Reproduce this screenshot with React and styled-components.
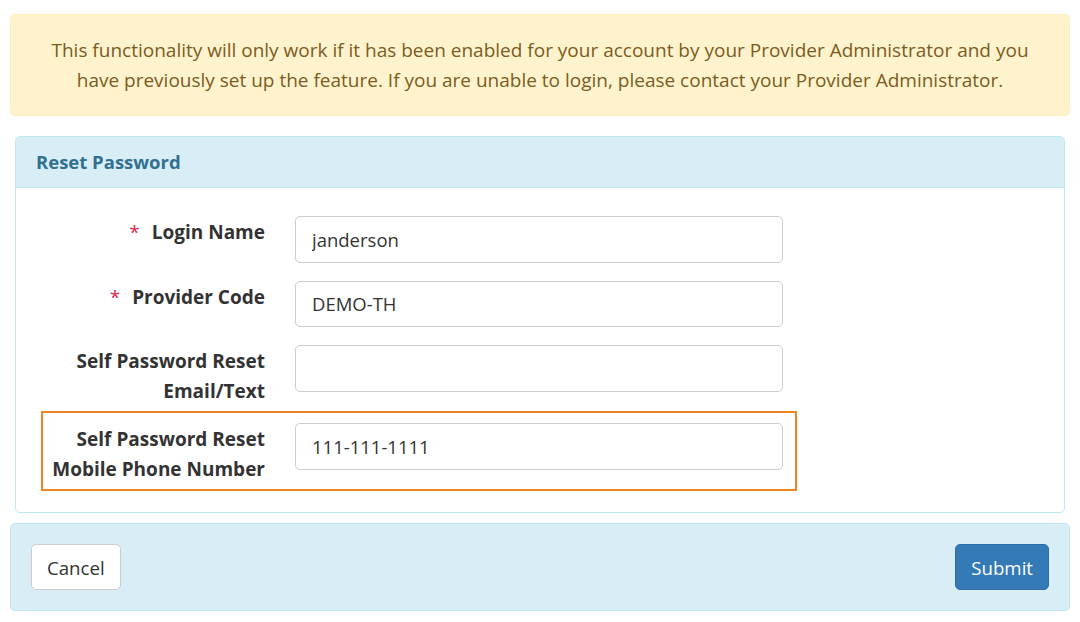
import styled, { createGlobalStyle } from "styled-components";

const GlobalStyle = createGlobalStyle`
    body {
        margin: 0;
        background: #fff;
        font-family: "Open Sans", "Noto Sans", sans-serif;
        color: #333;
    }
`;

const fields = [
    { id: "login", label: ["Login Name"], value: "janderson", required: true },
    { id: "provider", label: ["Provider Code"], value: "DEMO-TH", required: true },
    { id: "email", label: ["Self Password Reset", "Email/Text"], value: "" },
    { id: "mobile", label: ["Self Password Reset", "Mobile Phone Number"], value: "111-111-1111", highlight: true },
];

export default function App() {
    return (
        <>
            <GlobalStyle />
            <StyledPage>
                <StyledAlert>
                    This functionality will only work if it has been enabled for your account by your Provider Administrator and you
                    have previously set up the feature. If you are unable to login, please contact your Provider Administrator.
                </StyledAlert>

                <StyledPanel>
                    <StyledPanelHeading>
                        <StyledPanelTitle>Reset Password</StyledPanelTitle>
                    </StyledPanelHeading>
                    <StyledPanelBody>
                        {fields.map((field) => (
                            <StyledRow key={field.id} $highlight={field.highlight}>
                                <StyledLabel htmlFor={field.id}>
                                    {field.required && <StyledRequired>*</StyledRequired>}
                                    {field.label.map((line, index) => (
                                        <span key={index}>
                                            {index > 0 && <br />}
                                            {line}
                                        </span>
                                    ))}
                                </StyledLabel>
                                <StyledInput id={field.id} type="text" defaultValue={field.value} />
                            </StyledRow>
                        ))}
                    </StyledPanelBody>
                </StyledPanel>

                <StyledFooter>
                    <StyledButton type="button">Cancel</StyledButton>
                    <StyledButton type="button" $primary>
                        Submit
                    </StyledButton>
                </StyledFooter>
            </StyledPage>
        </>
    );
}

const StyledPage = styled.div`
    padding: 14px 10px 10px;
`;

const StyledAlert = styled.div`
    background: #fff3cd;
    border: 1px solid #ffeeba;
    border-radius: 5px;
    color: #7b5b22;
    padding: 20px;
    text-align: center;
    font-size: 19px;
    line-height: 30px;
`;

const StyledPanel = styled.section`
    margin: 20px 5px 0;
    border: 1px solid #bce8f1;
    border-radius: 5px;
    background: #fff;
`;

const StyledPanelHeading = styled.header`
    background: #d9edf7;
    border-bottom: 1px solid #bce8f1;
    border-radius: 4px 4px 0 0;
    padding: 13px 20px;
`;

const StyledPanelTitle = styled.h3`
    margin: 0;
    font-size: 18.5px;
    line-height: 24px;
    font-weight: 700;
    color: #31708f;
`;

const StyledPanelBody = styled.div`
    display: flex;
    flex-direction: column;
    padding: 28px 0 21px;
`;

const StyledRow = styled.div`
    display: grid;
    grid-template-columns: ${(p) => (p.$highlight ? "222px" : "249px")} 488px;
    column-gap: 30px;
    align-items: start;
    align-self: flex-start;
    margin-top: ${(p) => (p.$highlight ? "5px" : "18px")};
    margin-left: ${(p) => (p.$highlight ? "25px" : "0")};
    padding: ${(p) => (p.$highlight ? "10px 12px 5px 0" : "0")};
    border: ${(p) => (p.$highlight ? "2px solid #ef8427" : "none")};

    &:first-child {
        margin-top: 0;
    }
`;

const StyledLabel = styled.label`
    text-align: right;
    font-weight: 700;
    font-size: 19px;
    line-height: 30px;
    padding-top: 1px;
    color: #333;
`;

const StyledRequired = styled.span`
    color: #e0264f;
    font-weight: 400;
    margin-right: 12px;
`;

const StyledInput = styled.input`
    box-sizing: border-box;
    width: 100%;
    height: 46.67px;
    padding: 0 16px;
    border: 1px solid #ccc;
    border-radius: 5px;
    font-family: inherit;
    font-size: 18.5px;
    color: #333;
    background: #fff;
    outline: none;
`;

const StyledFooter = styled.footer`
    display: flex;
    justify-content: space-between;
    align-items: center;
    margin-top: 10px;
    padding: 20px;
    background: #d9edf7;
    border: 1px solid #bce8f1;
    border-radius: 5px;
`;

const StyledButton = styled.button`
    height: 46px;
    padding: 0 15px;
    font-family: inherit;
    font-size: 18.67px;
    border-radius: 5px;
    border: 1px solid ${(p) => (p.$primary ? "#2e6da4" : "#ccc")};
    background: ${(p) => (p.$primary ? "#337ab7" : "#fff")};
    color: ${(p) => (p.$primary ? "#fff" : "#333")};
    cursor: pointer;
`;
